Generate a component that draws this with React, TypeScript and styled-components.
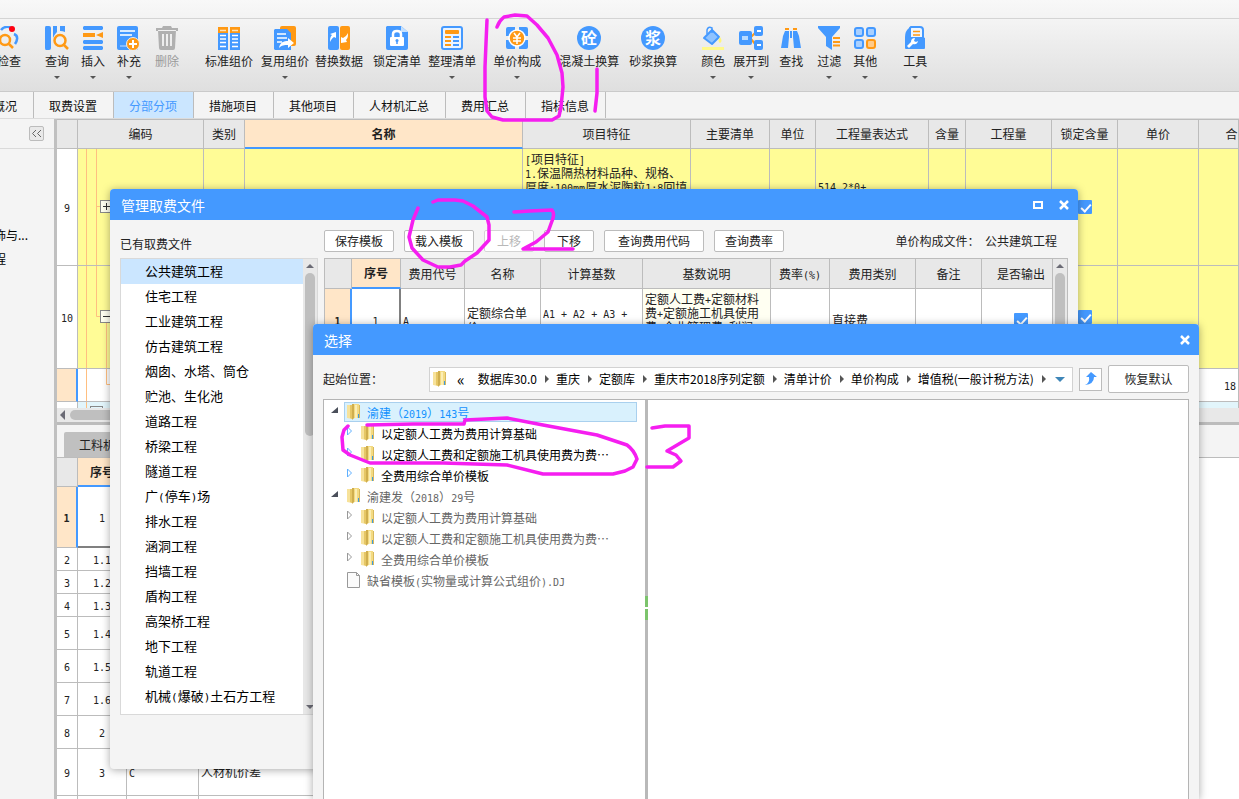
import React from "react";
import styled, { createGlobalStyle, css } from "styled-components";

const BLUE = "#4499ff";
const ORANGE = "#ff9914";
const LINE = "#bcbcbc";
const PANEL = "#f4f4f4";
const PEACH = "#ffe6c8";
const YELLOW = "#fffc96";
const INK = "#f51ef0";

const Global = createGlobalStyle`
  * { box-sizing: border-box; }
  html, body, #root { height: 100%; margin: 0; }
  body {
    overflow: hidden;
    background: ${PANEL};
    color: #222;
    font: 12px/14px "Noto Sans CJK SC", "Noto Sans", sans-serif;
  }
  button { font: inherit; color: inherit; padding: 0; cursor: pointer; }
  ul { list-style: none; margin: 0; padding: 0; }
`;

const Page = styled.div`
  position: relative;
  height: 100vh;
  display: flex;
  flex-direction: column;
  overflow: hidden;
`;

/* half-width Latin runs inside Chinese grid text */
const Half = styled.span<{ $size: number }>`
  font-family: "DejaVu Sans Mono", monospace;
  font-size: ${(p) => p.$size}px;
  line-height: 1;
`;

const Mixed = ({ text, size = 10 }: { text: string; size?: number }) => (
  <>
    {text.split(/([!-~][ -~]*)/).map((part, i) =>
      i % 2 ? <Half key={i} $size={size}>{part}</Half> : part
    )}
  </>
);

/* ---------- ribbon ---------- */

const TitleStrip = styled.div`
  flex: none;
  height: 19px;
  background: linear-gradient(#f8f8f8, #f3f3f3);
  border-bottom: 1px solid #d4d4d4;
`;

const Ribbon = styled.div`
  flex: none;
  display: flex;
  height: 73px;
  padding-top: 7px;
  background: linear-gradient(#f4f4f4, #dfdfdf);
  border-bottom: 1px solid #cacaca;
  overflow: hidden;
`;

const Tool = styled.button<{ $gap: number; $off?: boolean; $cut?: boolean }>`
  flex: none;
  display: flex;
  flex-direction: column;
  align-items: center;
  margin-left: ${(p) => p.$gap}px;
  border: 0;
  background: none;
  white-space: nowrap;
  color: ${(p) => (p.$off ? "#9a9a9a" : "#222")};
  ${(p) => p.$cut && css`width: 21px; align-items: flex-end;`}
`;

const ToolLabel = styled.span`
  margin-top: 3px;
  line-height: 16px;
`;

const Caret = styled.span<{ $up?: boolean; $color?: string }>`
  width: 0;
  height: 0;
  border: solid transparent;
  border-width: ${(p) => (p.$up ? "0 4px 4px" : "4px 4px 0")};
  border-${(p) => (p.$up ? "bottom" : "top")}-color: ${(p) => p.$color || "#6b6b75"};
`;

const ToolCaret = styled(Caret)`
  margin-top: 7px;
  border-width: 3px 3px 0;
  border-top-color: #555;
`;

const Icon = styled.svg`
  display: block;
  width: 24px;
  height: 24px;
`;

type ToolDef = { label: string; gap: number; drop?: boolean; off?: boolean; cut?: boolean; icon: React.ReactNode };

const tools: ToolDef[] = [
  {
    label: "检查", gap: 0, cut: true,
    icon: (
      <>
        <path d="M4 4c3-4 9-4 11-1M17 8c5 2 3 7 1 10" fill="none" stroke={BLUE} strokeWidth="2.5" />
        <circle cx="8" cy="14" r="5" fill="none" stroke={ORANGE} strokeWidth="2.5" />
        <path d="m12 18 4 4" stroke={ORANGE} strokeWidth="2.5" />
        <circle cx="15" cy="3" r="3" fill="#ff0010" />
      </>
    ),
  },
  {
    label: "查询", gap: 24, drop: true,
    icon: (
      <>
        <path d="M1 0h3q2 0 2 2v20q0 2-2 2H1q-1 0-1-2V2Q0 0 1 0z" fill={BLUE} />
        <path d="M8 0h4v6q-3 3-4 6zM15 0h5v6q-2-1-5-1z" fill={BLUE} />
        <circle cx="15" cy="14.500" r="5.500" fill="#f0f0f0" stroke={ORANGE} strokeWidth="2.500" />
        <path d="m19 19 4 4" stroke={ORANGE} strokeWidth="2.500" />
      </>
    ),
  },
  {
    label: "插入", gap: 12, drop: true,
    icon: (
      <>
        <path d="M3 0h18l1 1v2l-1 1H3L2 3V1zM3 14h18l1 1v2l-1 1H3l-1-1v-2zM3 20h18l1 1v2l-1 1H3l-1-1v-2z" fill={BLUE} />
        <path d="M2 7h12v4H2zM15 9l7-3v6z" fill={ORANGE} />
      </>
    ),
  },
  {
    label: "补充", gap: 12, drop: true,
    icon: (
      <>
        <rect x="0" y="0" width="21" height="24" rx="2" fill={BLUE} />
        <path d="M3 5h15M3 9h12" stroke="#d7eaff" strokeWidth="2" />
        <path d="M3 20h7" stroke="#fff" strokeWidth="1" opacity=".7" />
        <circle cx="16" cy="18" r="6.500" fill={ORANGE} stroke="#eee" />
        <path d="M16 14v8M12 18h8" stroke="#fff" strokeWidth="2" />
      </>
    ),
  },
  {
    label: "删除", gap: 14, off: true,
    icon: (
      <path
        fill="#b0b0b0" fillRule="evenodd"
        d="M8 0h8l1 2h6v3H1V2h6zM3 4h18l-1 18q0 2-2 2H6q-2 0-2-2zM7 8v12h2V8zM11 8v12h2V8zM15 8v12h2V8z"
      />
    ),
  },
  {
    label: "标准组价", gap: 26,
    icon: (
      <>
        <path d="M1 1h10v6H1zM13 1h10v6H13z" fill={ORANGE} />
        <path d="M1 7h10v17H1zM13 7h10v17H13z" fill={BLUE} />
        <path d="M3 4.500h6M15 4.500h6" stroke="#ffe3b8" strokeWidth="1.500" />
        <path d="M3 9.500h6M15 9.500h6M3 13h6M15 13h6M3 16.500h6M15 16.500h6M3 20.500h6M15 20.500h6" stroke="#fff" strokeWidth="1.500" />
      </>
    ),
  },
  {
    label: "复用组价", gap: 8, drop: true,
    icon: (
      <>
        <rect x="7" y="0" width="16" height="20" rx="2" fill={ORANGE} />
        <path d="M2 3h12l4 4v17H2l-1-1V4z" fill={BLUE} />
        <path d="M4 8h9M4 12h10M4 16h5" stroke="#fff" strokeWidth="1.500" />
        <path d="M6 22c1-6 5-7 9-7v-3l6 5-6 5v-3c-4 0-6 0-9 3z" fill="#fff" />
      </>
    ),
  },
  {
    label: "替换数据", gap: 6,
    icon: (
      <>
        <rect x="1" y="0" width="11" height="24" rx="2" fill={BLUE} />
        <rect x="13" y="0" width="10" height="24" rx="2" fill={ORANGE} />
        <path d="M3 16c0-3 0-5 2-7L3 8l6-2v6L7 11c-2 1-3 3-4 5zM21 7c0 3 0 5-2 7l1 2-6 1v-6l2 1c2-1 4-3 5-5z" fill="#fff" />
      </>
    ),
  },
  {
    label: "锁定清单", gap: 10,
    icon: (
      <>
        <path d="M2 0h14l7 6v16q0 2-2 2H3q-2 0-2-2V1z" fill={BLUE} />
        <path d="M16 0l7 6h-7z" fill="#c4e0ff" />
        <rect x="5" y="11" width="14" height="9" rx="1" fill="#fff" />
        <path d="M8 12V8q0-3 4-3t4 3v4" fill="none" stroke="#fff" strokeWidth="2.500" />
        <circle cx="12" cy="14.500" r="1.500" fill={BLUE} />
        <path d="M12 15v3" stroke={BLUE} strokeWidth="1.500" />
      </>
    ),
  },
  {
    label: "整理清单", gap: 7, drop: true,
    icon: (
      <>
        <rect x="2" y="1" width="20" height="22" rx="2" fill="#eaf4ff" stroke={BLUE} strokeWidth="2" />
        <rect x="5" y="4" width="14" height="4" rx="1" fill={ORANGE} />
        <path d="M5 11h6M5 15h6M5 19h6" stroke={ORANGE} strokeWidth="2" />
        <path d="M13 11h6M13 15h6M13 19h6" stroke={BLUE} strokeWidth="2" />
      </>
    ),
  },
  {
    label: "单价构成", gap: 17, drop: true,
    icon: (
      <>
        <path
          fill={BLUE}
          d="M1 3q0-2 2-2h7v3l-6 6H1zM23 3q0-2-2-2h-7v3l6 6h3zM1 21q0 2 2 2h7v-3l-6-6H1zM23 21q0 2-2 2h-7v-3l6-6h3z"
        />
        <circle cx="12" cy="12" r="8" fill={ORANGE} stroke="#fff" strokeWidth="1.500" />
        <path d="m9 7 3 4 3-4M8 12h8M8 15h8M12 11v7" fill="none" stroke="#fff" strokeWidth="1.500" />
      </>
    ),
  },
  {
    label: "混凝土换算", gap: 18,
    icon: (
      <>
        <circle cx="12" cy="12" r="12" fill={BLUE} />
        <text x="12" y="18" fontSize="16" fontWeight="700" textAnchor="middle" fill="#fff">砼</text>
      </>
    ),
  },
  {
    label: "砂浆换算", gap: 10,
    icon: (
      <>
        <circle cx="12" cy="12" r="12" fill={BLUE} />
        <text x="12" y="18" fontSize="16" fontWeight="700" textAnchor="middle" fill="#fff">浆</text>
      </>
    ),
  },
  {
    label: "颜色", gap: 24, drop: true,
    icon: (
      <>
        <path d="m11 4 7 7-7 7-8-6z" fill="#8fc3ff" stroke={BLUE} strokeWidth="2" strokeLinejoin="round" />
        <path d="M6 8V4q1-4 5-2v5" fill="none" stroke={BLUE} strokeWidth="1.500" />
        <path d="M19 11q3 4 0 6-3-2 0-6z" fill="#fff57a" />
        <path d="M1 22.500h22" stroke="#fff98a" strokeWidth="3" />
      </>
    ),
  },
  {
    label: "展开到", gap: 8, drop: true,
    icon: (
      <>
        <path d="m12 11 5-5M12 13l5 6" stroke={ORANGE} strokeWidth="2" />
        <rect x="0" y="5" width="13" height="14" rx="2" fill={BLUE} />
        <path d="M3 10h6v4H3z" fill="#b9dbff" />
        <rect x="15" y="0" width="9" height="10" rx="2" fill={BLUE} />
        <rect x="15" y="14" width="9" height="10" rx="2" fill={BLUE} />
        <path d="M18 5h4M18 19h4" stroke="#fff" strokeWidth="2" />
      </>
    ),
  },
  {
    label: "查找", gap: 10,
    icon: (
      <>
        <path d="M6 2h4v2H6zM14 2h4v2h-4z" fill={ORANGE} />
        <path d="M6 5h4v6l-1 11H2l2-12zM18 5h-4v6l1 11h7l-2-12zM11 5h2v7h-2z" fill={BLUE} />
      </>
    ),
  },
  {
    label: "过滤", gap: 14, drop: true,
    icon: (
      <>
        <path d="M1 0h22v2l-8 9v13l-6-4v-9L1 2z" fill={BLUE} />
        <path d="M16 12h7M16 16h7M16 19.500h7" stroke={ORANGE} strokeWidth="2" />
      </>
    ),
  },
  {
    label: "其他", gap: 12, drop: true,
    icon: (
      <>
        {[[2, 2], [14, 2], [2, 14]].map(([x, y]) => (
          <rect key={`${x}-${y}`} x={x} y={y} width="8" height="8" rx="2" fill="#a9d0ff" stroke={BLUE} strokeWidth="2" />
        ))}
        <rect x="14" y="14" width="8" height="8" rx="2" fill="#ffcb8a" stroke={ORANGE} strokeWidth="2" />
      </>
    ),
  },
  {
    label: "工具", gap: 26, drop: true,
    icon: (
      <>
        <path d="M8 1h9q3 0 3 3v8H7V2z" fill="#eef6ff" stroke={BLUE} strokeWidth="2" />
        <path d="M6 2Q2 5 2 11v11q0 1 1 1h18q1 0 1-1V12l-2-1-3 2H8z" fill={BLUE} />
        <path d="M10 5.500h7M10 9h7" stroke={ORANGE} strokeWidth="1.500" />
        <path d="m4 20 4-4q0-4 4-4l-1 3 2 1 2-1q-1 4-5 3l-4 4z" fill="#fff" />
      </>
    ),
  },
];

/* ---------- module tabs ---------- */

const TabStrip = styled.div`
  flex: none;
  display: flex;
  height: 27px;
  border-bottom: 1px solid #dcdcdc;
`;

const ModuleTab = styled.button<{ $w: number; $on?: boolean; $cut?: boolean }>`
  flex: none;
  display: flex;
  justify-content: ${(p) => (p.$cut ? "flex-end" : "center")};
  align-items: center;
  width: ${(p) => p.$w}px;
  height: 26px;
  padding: 2px ${(p) => (p.$cut ? 16 : 1)}px 0 0;
  border: 0;
  border-right: 1px solid ${LINE};
  white-space: nowrap;
  overflow: hidden;
  color: ${(p) => (p.$on ? BLUE : "#111")};
  background: ${(p) => (p.$on ? "#cbe6ff" : "transparent")};
`;

const moduleTabs = [
  { t: "概况", w: 34, cut: true },
  { t: "取费设置", w: 80 },
  { t: "分部分项", w: 80, on: true },
  { t: "措施项目", w: 80 },
  { t: "其他项目", w: 80 },
  { t: "人材机汇总", w: 92 },
  { t: "费用汇总", w: 80 },
  { t: "指标信息", w: 80 },
];

/* ---------- workspace ---------- */

const Workspace = styled.div`
  flex: 1;
  min-height: 0;
  display: flex;
`;

const Sidebar = styled.aside`
  flex: none;
  width: 57px;
  border-right: 3px solid #c0c0c0;
  overflow: hidden;
`;

const SideHead = styled.div`
  display: flex;
  justify-content: flex-end;
  align-items: center;
  height: 30px;
  padding-right: 10px;
  border-bottom: 1px solid #dadada;
`;

const Collapse = styled.button`
  display: grid;
  place-items: center;
  width: 15px;
  height: 15px;
  border: 1px solid ${LINE};
  border-radius: 2px;
  background: #e9e9e9;
`;

const SideList = styled.ul`
  padding-top: 74px;
`;

const SideItem = styled.li<{ $w: number }>`
  display: flex;
  justify-content: flex-end;
  width: ${(p) => p.$w}px;
  line-height: 24px;
  white-space: nowrap;
  color: #000;
`;

const Main = styled.main`
  flex: 1;
  min-width: 0;
  display: flex;
  flex-direction: column;
`;

const GridView = styled.div`
  flex: none;
  height: 289px;
  overflow: hidden;
  background: #fff;
  border-top: 1px solid ${LINE};
`;

const Grid = styled.table`
  width: 100%;
  align-self: flex-start;
  table-layout: fixed;
  border-spacing: 0;
`;

const Th = styled.th<{ $on?: boolean; $h?: number; $pad?: number }>`
  height: ${(p) => p.$h || 29}px;
  padding: 0 0 0 ${(p) => p.$pad || 0}px;
  font-weight: ${(p) => (p.$on ? 700 : 400)};
  white-space: nowrap;
  overflow: hidden;
  background: ${(p) => (p.$on ? PEACH : "#e8e8e8")};
  border-right: 1px solid ${LINE};
  border-bottom: ${(p) => (p.$on ? `2px solid ${BLUE}` : `1px solid ${LINE}`)};
`;

const Td = styled.td<{ $bg?: string; $top?: boolean; $align?: "left" | "right"; $heavy?: "right" | "bottom" }>`
  padding: 0 2px;
  overflow: hidden;
  white-space: nowrap;
  text-align: ${(p) => p.$align || "center"};
  vertical-align: ${(p) => (p.$top ? "top" : "middle")};
  background: ${(p) => p.$bg || "#fff"};
  border-right: 1px solid ${LINE};
  border-bottom: 1px solid ${LINE};
  ${(p) => p.$heavy && css`border-${p.$heavy}: 2px solid #808080;`}
`;

const TreeTd = styled(Td)`
  padding: 0;
  vertical-align: top;
`;

const LastTd = styled(Td)`
  padding-left: 10px;
`;

const NumTd = styled(Td)<{ $on?: boolean }>`
  padding: 0;
  font-weight: ${(p) => (p.$on ? 700 : 400)};
  ${(p) => p.$on && css`background: ${PEACH}; border-right: 2px solid ${BLUE};`}
`;

const Tr = styled.tr<{ $h: number }>`
  height: ${(p) => p.$h}px;
`;

const Lines = styled.div<{ $pt?: number }>`
  padding-top: ${(p) => p.$pt || 0}px;
  white-space: pre;
  overflow: hidden;
`;

const Check = styled.input.attrs({ type: "checkbox" })`
  appearance: none;
  display: block;
  width: 14px;
  height: 14px;
  margin: 0 auto;
  border-radius: 1px;
  background: ${BLUE};
  position: relative;
  &::after {
    content: "";
    position: absolute;
    left: 5px;
    top: 2px;
    width: 4px;
    height: 8px;
    border: solid #fff;
    border-width: 0 2px 2px 0;
    transform: rotate(42deg);
  }
`;

const TreeArt = styled.svg`
  display: block;
`;

const HScroll = styled.div`
  flex: none;
  display: flex;
  align-items: center;
  height: 14px;
  padding: 0 5px 0 3px;
  gap: 4px;
  background: #e8e8e8;
`;

const HThumb = styled.span`
  flex: 1;
  max-width: 700px;
  height: 10px;
  border-radius: 5px;
  background: #bfbfbf;
`;

const SubTabs = styled.div`
  flex: none;
  display: flex;
  align-items: flex-end;
  height: 36px;
  padding-left: 7px;
  border-top: 3px solid ${LINE};
  border-bottom: 1px solid ${LINE};
`;

const SubTab = styled.button`
  width: 90px;
  height: 25px;
  border: 0;
  border-radius: 2px 2px 0 0;
  background: #c0c0c0;
`;

const LowerView = styled.div`
  flex: 1;
  overflow: hidden;
  background: #fff;
`;

const LowerTable = styled(Grid)`
  width: 700px;
`;

const gridCols: { t: string; w?: number; on?: boolean }[] = [
  { t: "", w: 21 }, { t: "编码", w: 126 }, { t: "类别", w: 41 }, { t: "名称", w: 278, on: true },
  { t: "项目特征", w: 168 }, { t: "主要清单", w: 79 }, { t: "单位", w: 46 }, { t: "工程量表达式", w: 113 },
  { t: "含量", w: 37 }, { t: "工程量", w: 86 }, { t: "锁定含量", w: 66 }, { t: "单价", w: 81 }, { t: "合" },
];

const Branch = ({ h, children }: { h: number; children: React.ReactNode }) => (
  <TreeArt width="125" height={h} fill="none" stroke="#ffbf80">{children}</TreeArt>
);

const Toggle = ({ y, open }: { y: number; open?: boolean }) => (
  <>
    <rect x="22.5" y={y + 0.5} width="12" height="12" fill="#fffff0" stroke="#888" />
    <path d={`M25 ${y + 6.5}h7${open ? "" : `M28.500 ${y + 3}v7`}`} stroke="#333" />
  </>
);

const lowerRows: { n: string; v: string; h: number }[] = [
  { n: "2", v: "1.1", h: 23 }, { n: "3", v: "1.2", h: 23 }, { n: "4", v: "1.3", h: 23 }, { n: "5", v: "1.4", h: 33 },
  { n: "6", v: "1.5", h: 33 }, { n: "7", v: "1.6", h: 33 }, { n: "8", v: "2", h: 33 },
];

/* ---------- dialogs ---------- */

const Dialog = styled.section`
  position: absolute;
  display: flex;
  flex-direction: column;
  border-radius: 4px;
  background: ${PANEL};
  box-shadow: 0 1px 8px rgba(0, 0, 0, 0.35);
  overflow: hidden;
`;

const FeeDialog = styled(Dialog)`
  left: 110px;
  top: 189px;
  width: 968px;
  height: 580px;
`;

const PickDialog = styled(Dialog)`
  left: 313px;
  top: 324px;
  bottom: 0;
  width: 886px;
  border-radius: 4px 4px 0 0;
`;

const DialogHead = styled.header`
  flex: none;
  display: flex;
  align-items: center;
  height: 31px;
  padding: 0 7px 0 11px;
  gap: 12px;
  color: #fff;
  background: ${BLUE};
`;

const DialogTitle = styled.h2`
  flex: 1;
  margin: 0;
  font-size: 14px;
  line-height: 20px;
  font-weight: 400;
`;

const WinButton = styled.button`
  display: grid;
  place-items: center;
  width: 14px;
  height: 14px;
  border: 0;
  background: none;
`;

const CloseIcon = () => (
  <svg width="10" height="10" stroke="#fff" strokeWidth="2.500"><path d="m1 1 8 8M9 1 1 9" /></svg>
);

const FeeBody = styled.div`
  flex: 1;
  min-height: 0;
  display: flex;
  gap: 6px;
  padding: 10px 10px 54px;
`;

const FeeSide = styled.div`
  flex: none;
  width: 198px;
  display: flex;
  flex-direction: column;
`;

const SideLabel = styled.div`
  height: 28px;
  line-height: 28px;
`;

const FileBox = styled.div`
  flex: 1;
  min-height: 0;
  display: flex;
  border: 1px solid #d9d9d9;
  background: #fff;
`;

const FileList = styled.ul`
  flex: 1;
`;

const FileButton = styled.button<{ $on?: boolean }>`
  width: 100%;
  height: 25px;
  padding: 0 0 2px 24px;
  border: 0;
  text-align: left;
  font-size: 13px;
  color: #000;
  background: ${(p) => (p.$on ? "#cbe6ff" : "none")};
`;

const VScroll = styled.div`
  flex: none;
  display: flex;
  flex-direction: column;
  align-items: center;
  width: 14px;
  padding: 5px 0;
  gap: 5px;
  background: #e8e8e8;
`;

const VThumb = styled.span<{ $h?: number }>`
  width: 10px;
  border-radius: 5px;
  background: #bfbfbf;
  ${(p) => (p.$h ? css`height: ${p.$h}px; margin-bottom: auto;` : css`flex: 1;`)}
`;

const FeeMain = styled.div`
  flex: 1;
  min-width: 0;
  display: flex;
  flex-direction: column;
`;

const Actions = styled.div`
  flex: none;
  display: flex;
  align-items: center;
  gap: 10px;
  height: 22px;
  margin-bottom: 6px;
`;

const Action = styled.button<{ $w: number }>`
  width: ${(p) => p.$w}px;
  height: 22px;
  border: 1px solid ${LINE};
  border-radius: 2px;
  background: #fff;
  color: #222;
  &:disabled { color: #b8b8b8; border-color: #d4d4d4; }
`;

const FileName = styled.span`
  margin-left: auto;
  padding-right: 11px;
  white-space: pre;
`;

const FeeTableBox = styled.div`
  flex: 1;
  display: flex;
  overflow: hidden;
  border: 1px solid ${LINE};
  background: #fff;
`;

const feeCols: { t: string; w?: number; on?: boolean }[] = [
  { t: "", w: 27 }, { t: "序号", w: 49, on: true }, { t: "费用代号", w: 64 }, { t: "名称", w: 76 },
  { t: "计算基数", w: 102 }, { t: "基数说明", w: 128 }, { t: "费率(%)", w: 59 }, { t: "费用类别", w: 86 },
  { t: "备注", w: 66 }, { t: "是否输出" },
];

const files = [
  "公共建筑工程", "住宅工程", "工业建筑工程", "仿古建筑工程", "烟囱、水塔、筒仓", "贮池、生化池", "道路工程",
  "桥梁工程", "隧道工程", "广(停车)场", "排水工程", "涵洞工程", "挡墙工程", "盾构工程", "高架桥工程",
  "地下工程", "轨道工程", "机械(爆破)土石方工程",
];

const PickBody = styled.div`
  flex: 1;
  min-height: 0;
  display: flex;
  flex-direction: column;
  gap: 6px;
  padding: 10px 10px 0;
`;

const PathRow = styled.div`
  flex: none;
  display: flex;
  align-items: center;
  height: 28px;
`;

const PathLabel = styled.span`
  flex: none;
  width: 106px;
`;

const PathBox = styled.nav`
  flex: 1;
  display: flex;
  align-items: center;
  height: 25px;
  padding: 0 7px 0 3px;
  border: 1px solid #d2d2d2;
  background: #fff;
  color: #000;
`;

const Crumb = styled.button`
  flex: none;
  border: 0;
  background: none;
  white-space: nowrap;
`;

const Chevrons = styled.span`
  padding: 0 13px 0 11px;
  font-size: 16px;
`;

const CrumbArrow = styled.span`
  margin: 0 7px 0 8px;
  border: solid transparent;
  border-width: 4px 0 4px 4px;
  border-left-color: #555;
`;

const PathDrop = styled(Caret)`
  margin-left: auto;
  border-width: 5px 5px 0;
`;

const UpButton = styled.button`
  display: grid;
  place-items: center;
  width: 23px;
  height: 23px;
  margin: 0 6px;
  border: 1px solid ${LINE};
  background: #fff;
`;

const ResetButton = styled.button`
  width: 81px;
  height: 28px;
  border: 1px solid ${LINE};
  border-radius: 2px;
  background: #fff;
`;

const Panes = styled.div`
  flex: 1;
  display: flex;
  border: 1px solid #b4b4b4;
  border-bottom: 0;
  background: #fff;
`;

const TreePane = styled.ul`
  flex: none;
  width: 321px;
  padding: 1px 8px 0 5px;
`;

const Splitter = styled.div`
  flex: none;
  display: flex;
  align-items: flex-start;
  width: 3px;
  padding-top: 196px;
  background: #b9b9b9;
`;

const Grip = styled.span`
  width: 3px;
  height: 24px;
  background: linear-gradient(#7cc46c 11px, #fff 11px, #fff 13px, #7cc46c 13px);
`;

const TreeRow = styled.li<{ $deep?: boolean; $color: string }>`
  display: flex;
  align-items: center;
  height: 21px;
  padding-left: ${(p) => (p.$deep ? 14 : 0)}px;
  color: ${(p) => p.$color};
`;

const TreeToggle = styled.svg`
  flex: none;
  width: 15px;
  height: 15px;
`;

const TreeItem = styled.button<{ $on?: boolean }>`
  flex: 1;
  display: flex;
  align-items: center;
  gap: 7px;
  height: 20px;
  padding: 0 2px;
  border: 1px solid ${(p) => (p.$on ? "#a9d0ee" : "transparent")};
  background: ${(p) => (p.$on ? "#d9f1fd" : "none")};
  white-space: nowrap;
`;

const TreeText = styled.span`
  padding-top: 2px;
`;

const Folder = () => (
  <svg width="13" height="16" viewBox="0 0 13 16">
    <path d="M0 1h5v14l-5-1z" fill="#f7e29a" />
    <path d="M3 1h2v14l-2-1z" fill="#e6c766" />
    <path d="M6 0h6v14H8l-3 1z" fill="#f3da82" />
    <path d="M5 0h2v14l-2 2z" fill="#cfae4e" />
    <path d="M8 1h2v13H8z" fill="#fbeeb4" />
    <path d="M12 1h1v13h-1z" fill="#d8b95c" />
    <path d="M11 10h1v4h-1z" fill="#3f9be0" />
  </svg>
);

const Sheet = () => (
  <svg width="13" height="16" viewBox="0 0 13 16">
    <path d="M.5.5h9l3 3v12H.5z" fill="#fbfbfb" stroke="#999" />
    <path d="M9.500.5v3h3" fill="none" stroke="#999" />
  </svg>
);

type Node = { t: string; c: string; deep?: boolean; on?: boolean; kind?: "file" };
const nodes: Node[] = [
  { t: "渝建（2019）143号", c: "#1492ff", on: true },
  { t: "以定额人工费为费用计算基础", c: "#000", deep: true },
  { t: "以定额人工费和定额施工机具使用费为费⋯", c: "#000", deep: true },
  { t: "全费用综合单价模板", c: "#000", deep: true },
  { t: "渝建发（2018）29号", c: "#666" },
  { t: "以定额人工费为费用计算基础", c: "#666", deep: true },
  { t: "以定额人工费和定额施工机具使用费为费⋯", c: "#666", deep: true },
  { t: "全费用综合单价模板", c: "#666", deep: true },
  { t: "缺省模板(实物量或计算公式组价).DJ", c: "#666", kind: "file" },
];

const crumbs = ["数据库30.0", "重庆", "定额库", "重庆市2018序列定额", "清单计价", "单价构成", "增值税(一般计税方法)"];

/* ---------- pen marks over the whole window ---------- */

const Pen = styled.svg`
  position: absolute;
  left: 0;
  top: 0;
  pointer-events: none;
`;

const PenMarks = () => (
  <Pen width="1239" height="799" fill="none" stroke={INK} strokeWidth="3.500" strokeLinecap="round" strokeLinejoin="round">
    <path d="M487 20 486 43 485 67 485 97 487 111 492 117 503 120H552L559 116 561 107 563 87 562 73 557 55 548 38 537 25 527 16 515 15 504 17Q499 21 497 27" />
    <path d="M597 69V93L595 111" />
    <path d="M418 208 413 220 409 237 412 248 423 260 438 267 450 267 461 265 465 261 477 253 489 240 489 225 487 217 473 206 463 201 455 200H438L433 202" />
    <path d="M514 212 530 211 552 210Q555 214 552 221L548 232 536 242 523 249H573" />
    <path d="M367 425 413 424 464 424 465 420 507 418 543 425 597 435 627 445Q634 450 637 459L633 467 625 471 613 474H543L507 465 443 463H370L350 455 343 450 342 437 344 430 348 426" />
    <path d="M652 428 665 426H689V438L667 451 676 455 681 461 673 467H647" />
  </Pen>
);

const yellowCells = (from: number, to: number) =>
  Array.from({ length: to - from }, (_, i) => <Td key={from + i} $bg={YELLOW} />);

export default function App() {
  return (
    <Page>
      <Global />
      <TitleStrip />
      <Ribbon>
        {tools.map((t) => (
          <Tool key={t.label} $gap={t.gap} $off={t.off} $cut={t.cut} disabled={t.off}>
            <Icon viewBox="0 0 24 24">{t.icon}</Icon>
            <ToolLabel>{t.label}</ToolLabel>
            {t.drop && <ToolCaret />}
          </Tool>
        ))}
      </Ribbon>
      <TabStrip>
        {moduleTabs.map((t) => (
          <ModuleTab key={t.t} $w={t.w} $on={t.on} $cut={t.cut}>{t.t}</ModuleTab>
        ))}
      </TabStrip>

      <Workspace>
        <Sidebar>
          <SideHead>
            <Collapse aria-label="收起">
              <svg width="11" height="9" fill="none" stroke="#666"><path d="M5 1 1.500 4.500 5 8M10 1 6.500 4.500 10 8" /></svg>
            </Collapse>
          </SideHead>
          <SideList>
            <SideItem $w={28}>饰与...</SideItem>
            <SideItem $w={6}>程</SideItem>
          </SideList>
        </Sidebar>

        <Main>
          <GridView>
            <Grid>
              <colgroup>{gridCols.map((c) => <col key={c.t} width={c.w} />)}</colgroup>
              <thead>
                <tr>
                  {gridCols.map((c) => (
                    <Th key={c.t} $on={c.on} $pad={c.w ? 0 : 26}>{c.t}</Th>
                  ))}
                </tr>
              </thead>
              <tbody>
                <Tr $h={117}>
                  <NumTd><Mixed text="9" /></NumTd>
                  <TreeTd $bg={YELLOW}>
                    <Branch h={116}>
                      <path d="M8.500 0v116M18.500 0v116M18.500 57.500h4" />
                      <Toggle y={51} />
                    </Branch>
                  </TreeTd>
                  {yellowCells(2, 4)}
                  <Td $bg={YELLOW} $align="left" $top>
                    <Lines $pt={3}><Mixed text={"[项目特征]\n1.保温隔热材料品种、规格、\n厚度:100mm厚水泥陶粒1:8回填"} /></Lines>
                  </Td>
                  {yellowCells(5, 7)}
                  <Td $bg={YELLOW} $align="left" $top><Lines $pt={30}><Mixed text="514.2*0+" /></Lines></Td>
                  {yellowCells(8, 10)}
                  <Td $bg={YELLOW}><Check aria-label="锁定含量 9" defaultChecked /></Td>
                  {yellowCells(11, 13)}
                </Tr>
                <Tr $h={103}>
                  <NumTd><Mixed text="10" /></NumTd>
                  <TreeTd $bg={YELLOW}>
                    <Branch h={102}>
                      <path d="M8.500 0v102M18.500 0v50.500h4M28.500 57v45" />
                      <Toggle y={44} open />
                    </Branch>
                  </TreeTd>
                  {yellowCells(2, 10)}
                  <Td $bg={YELLOW}><Check aria-label="锁定含量 10" defaultChecked /></Td>
                  {yellowCells(11, 13)}
                </Tr>
                <Tr $h={33}>
                  <NumTd $on />
                  <TreeTd><Branch h={32}><path d="M8.500 0v32M28.500 0v15.500h6" /></Branch></TreeTd>
                  {Array.from({ length: 10 }, (_, i) => <Td key={i} />)}
                  <Td $align="right"><Mixed text="18" /></Td>
                </Tr>
                <Tr $h={21}>
                  <NumTd />
                  <TreeTd $bg="#e2f5fb">
                    <Branch h={20}><path d="M8.500 0v20" /><rect x="12.500" y="4.500" width="12" height="12" stroke="#888" /></Branch>
                  </TreeTd>
                  {Array.from({ length: 11 }, (_, i) => <Td key={i} $bg="#e2f5fb" />)}
                </Tr>
              </tbody>
            </Grid>
          </GridView>
          <HScroll>
            <svg width="6" height="10"><path d="M5 0v10L0 5z" fill="#6b6b75" /></svg>
            <HThumb />
          </HScroll>
          <SubTabs><SubTab>工料机显示</SubTab></SubTabs>
          <LowerView>
            <LowerTable>
              <colgroup><col width="21" /><col width="49" /><col width="72" /><col /></colgroup>
              <thead><tr><Th /><Th $on>序号</Th><Th /><Th /></tr></thead>
              <tbody>
                <Tr $h={61}>
                  <NumTd $on><Mixed text="1" /></NumTd><Td $heavy="bottom"><Mixed text="1" /></Td><Td /><Td />
                </Tr>
                {lowerRows.map((r) => (
                  <Tr key={r.n} $h={r.h}><NumTd><Mixed text={r.n} /></NumTd><Td><Mixed text={r.v} /></Td><Td /><Td /></Tr>
                ))}
                <Tr $h={47}>
                  <NumTd><Mixed text="9" /></NumTd><Td><Mixed text="3" /></Td>
                  <Td $align="left"><Mixed text="C" /></Td><Td $align="left">人材机价差</Td>
                </Tr>
                <Tr $h={30}><NumTd /><Td /><Td /><Td /></Tr>
              </tbody>
            </LowerTable>
          </LowerView>
        </Main>
      </Workspace>

      <FeeDialog>
        <DialogHead>
          <DialogTitle>管理取费文件</DialogTitle>
          <WinButton aria-label="最大化">
            <svg width="10" height="8" fill="none" stroke="#fff" strokeWidth="2"><path d="M1 1h8v6H1z" /></svg>
          </WinButton>
          <WinButton aria-label="关闭"><CloseIcon /></WinButton>
        </DialogHead>
        <FeeBody>
          <FeeSide>
            <SideLabel>已有取费文件</SideLabel>
            <FileBox>
              <FileList>
                {files.map((f, i) => (
                  <li key={f}><FileButton $on={i === 0}><Mixed text={f} size={11} /></FileButton></li>
                ))}
              </FileList>
              <VScroll><Caret $up /><VThumb $h={163} /><Caret /></VScroll>
            </FileBox>
          </FeeSide>
          <FeeMain>
            <Actions>
              <Action $w={70}>保存模板</Action>
              <Action $w={70}>载入模板</Action>
              <Action $w={50} disabled>上移</Action>
              <Action $w={50}>下移</Action>
              <Action $w={100}>查询费用代码</Action>
              <Action $w={70}>查询费率</Action>
              <FileName>{"单价构成文件：  公共建筑工程"}</FileName>
            </Actions>
            <FeeTableBox>
              <Grid>
                <colgroup>{feeCols.map((c) => <col key={c.t} width={c.w} />)}</colgroup>
                <thead>
                  <tr>
                    {feeCols.map((c) => (
                      <Th key={c.t} $h={30} $on={c.on} $pad={c.w ? 0 : 8}><Mixed text={c.t} /></Th>
                    ))}
                  </tr>
                </thead>
                <tbody>
                  <Tr $h={62}>
                    <NumTd $on><Mixed text="1" /></NumTd>
                    <Td $heavy="right"><Mixed text="1" /></Td>
                    <Td $align="left"><Mixed text="A" /></Td>
                    <Td $align="left"><Lines>{"定额综合单\n价"}</Lines></Td>
                    <Td $align="left"><Lines><Mixed text={"A1 + A2 + A3 +\nA4 + A5 + A6"} /></Lines></Td>
                    <Td $align="left" $top $bg="#fffff2">
                      <Lines $pt={3}><Mixed text={"定额人工费+定额材料\n费+定额施工机具使用\n费+企业管理费+利润"} /></Lines>
                    </Td>
                    <Td />
                    <Td $align="left">直接费</Td>
                    <Td />
                    <LastTd><Check aria-label="是否输出 1" defaultChecked /></LastTd>
                  </Tr>
                </tbody>
              </Grid>
              <VScroll><Caret $up /><VThumb /><Caret /></VScroll>
            </FeeTableBox>
          </FeeMain>
        </FeeBody>
      </FeeDialog>

      <PickDialog>
        <DialogHead>
          <DialogTitle>选择</DialogTitle>
          <WinButton aria-label="关闭"><CloseIcon /></WinButton>
        </DialogHead>
        <PickBody>
          <PathRow>
            <PathLabel>起始位置：</PathLabel>
            <PathBox>
              <Folder />
              <Chevrons>«</Chevrons>
              {crumbs.map((c) => (
                <React.Fragment key={c}><Crumb>{c}</Crumb><CrumbArrow /></React.Fragment>
              ))}
              <PathDrop $color="#3f86b8" />
            </PathBox>
            <UpButton aria-label="上一级">
              <svg width="13" height="14"><path d="M7 0l6 5h-3q0 7-9 8 5-2 4-8H2z" fill={BLUE} /></svg>
            </UpButton>
            <ResetButton>恢复默认</ResetButton>
          </PathRow>
          <Panes>
            <TreePane>
              {nodes.map((n, i) => (
                <TreeRow key={i} $deep={n.deep} $color={n.c}>
                  <TreeToggle viewBox="0 0 15 15">
                    {n.deep && <path d="M4.500 2v8l4-4z" fill="#fff" stroke={n.c === "#000" ? "#5fb0ff" : "#999"} />}
                    {!n.deep && !n.kind && <path d="M9 3v6H2z" fill="#4a4f5a" />}
                  </TreeToggle>
                  <TreeItem $on={n.on}>
                    {n.kind ? <Sheet /> : <Folder />}
                    <TreeText><Mixed text={n.t} /></TreeText>
                  </TreeItem>
                </TreeRow>
              ))}
            </TreePane>
            <Splitter><Grip /></Splitter>
          </Panes>
        </PickBody>
      </PickDialog>

      <PenMarks />
    </Page>
  );
}
